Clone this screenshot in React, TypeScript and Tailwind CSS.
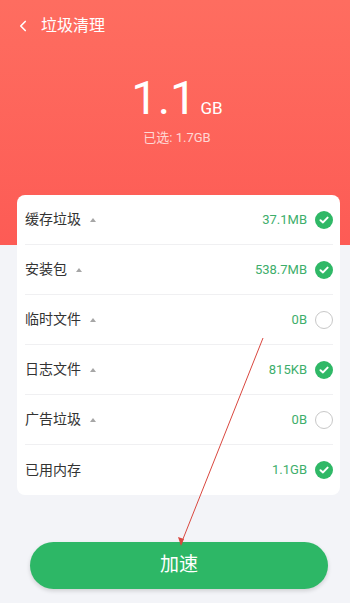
import { ChevronLeft } from 'lucide-react'

type Item = { name: string; size: string; checked: boolean; arrow: boolean }

const items: Item[] = [
  { name: '缓存垃圾', size: '37.1MB', checked: true, arrow: true },
  { name: '安装包', size: '538.7MB', checked: true, arrow: true },
  { name: '临时文件', size: '0B', checked: false, arrow: true },
  { name: '日志文件', size: '815KB', checked: true, arrow: true },
  { name: '广告垃圾', size: '0B', checked: false, arrow: true },
  { name: '已用内存', size: '1.1GB', checked: true, arrow: false },
]

const font = { fontFamily: 'Roboto, "Noto Sans CJK SC", sans-serif' }

function Check({ on }: { on: boolean }) {
  if (!on) return <div className="w-[18px] h-[18px] rounded-full border border-[#c8c8c8] bg-white" />
  return (
    <div className="w-[18px] h-[18px] rounded-full bg-[#2fb866] flex items-center justify-center">
      <svg width="10" height="8" viewBox="0 0 10 8" fill="none">
        <path d="M1.5 4.2 L4 6.4 L8.6 1.6" stroke="white" strokeWidth="2" strokeLinecap="round" strokeLinejoin="round" />
      </svg>
    </div>
  )
}

export default function App() {
  return (
    <div className="relative w-[350px] h-[603px] overflow-hidden bg-[#f3f4f8] flex flex-col" style={font}>
      {/* HEADER */}
      <div className="h-[245px] shrink-0 bg-gradient-to-b from-[#fe6d60] to-[#fd5b55] text-white">
        <div className="flex items-center h-[52px] pl-[14px] gap-[9px]">
          <ChevronLeft size={18} strokeWidth={2.2} />
          <span className="text-[16px]">垃圾清理</span>
        </div>
        <div className="flex flex-col items-center mt-[22px] ml-[4px]">
          <div className="flex items-baseline">
            <span className="text-[47px] leading-[48px]">1.1</span>
            <span className="text-[17px] ml-[4px]">GB</span>
          </div>
          <span className="text-[13px] text-white/75 mt-[6px]">已选: 1.7GB</span>
        </div>
      </div>

      {/* LIST CARD */}
      <div className="ml-[17px] w-[323px] -mt-[50px] bg-white rounded-[8px] pl-[8px] pr-[7px]">
        {items.map((it, i) => (
          <div
            key={it.name}
            className={`h-[50px] flex items-center ${i < items.length - 1 ? 'border-b border-[#f0f0f2]' : ''}`}
          >
            <span className="text-[14px] text-[#333]">{it.name}</span>
            {it.arrow && (
              <svg width="8" height="6" viewBox="0 0 8 6" className="ml-[8px]">
                <path d="M4 1 L7 5 L1 5 Z" fill="#a6a6a6" />
              </svg>
            )}
            <span className="ml-auto text-[13px] text-[#3dae6b]">{it.size}</span>
            <div className="ml-[8px]">
              <Check on={it.checked} />
            </div>
          </div>
        ))}
      </div>

      {/* BUTTON */}
      <div className="flex-1 flex items-end pl-[30px] pb-[14px]">
        <button className="w-[298px] h-[47px] rounded-full bg-[#2db766] text-white text-[19px] shadow-[0_2px_4px_rgba(0,0,0,0.15)]">
          加速
        </button>
      </div>

      {/* annotation arrow */}
      <svg className="absolute inset-0 pointer-events-none" width="350" height="603">
        <line x1="263" y1="338" x2="181" y2="544" stroke="#d9473f" strokeWidth="1" />
        <path d="M181 546 L178 537 L184 539 Z" fill="#d9473f" />
      </svg>
    </div>
  )
}
